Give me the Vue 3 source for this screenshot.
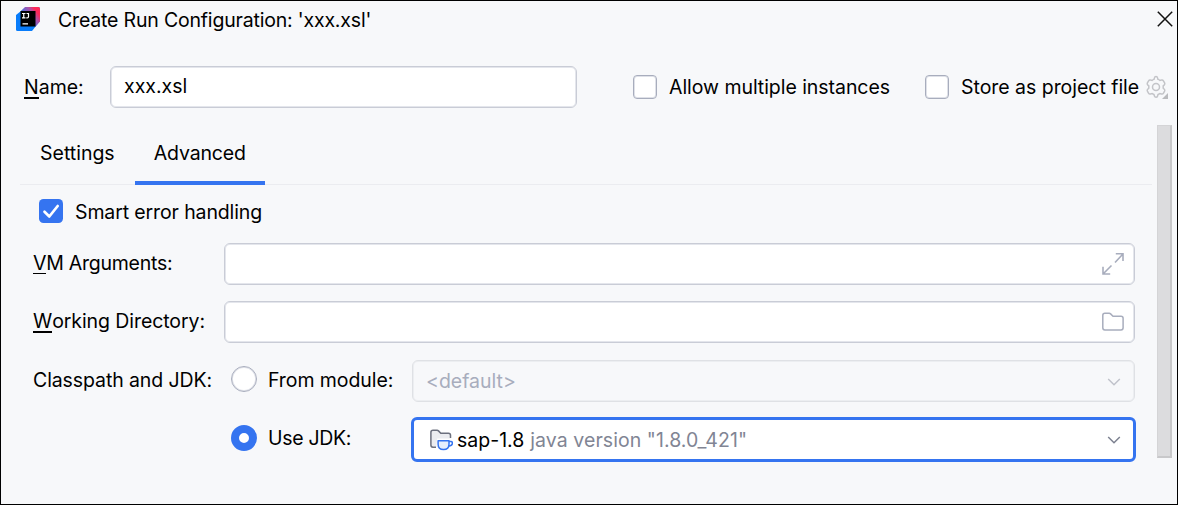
<script setup>
import { ref } from 'vue'

const name = ref('xxx.xsl')
const tabs = ['Settings', 'Advanced']
const active = ref('Advanced')
</script>

<template>
  <div class="dialog">
    <header class="titlebar">
      <svg class="logo" width="24" height="24" viewBox="0 0 24 24">
        <defs>
          <linearGradient id="pink" x1="0.2" y1="0.6" x2="0.9" y2="0.1">
            <stop offset="0" stop-color="#3573e8" />
            <stop offset="0.55" stop-color="#a653ad" />
            <stop offset="0.85" stop-color="#fe2857" />
          </linearGradient>
        </defs>
        <path d="M10 0H22.5Q24 0 24 1.5V14L16 24H1.5Q0 24 0 22.5V8Z" fill="#087cfa" />
        <path d="M9 0H22.5Q24 0 24 1.5V14.5L19 20V4H5Z" fill="url(#pink)" />
        <rect x="4.5" y="4" width="15" height="15.5" fill="#000" />
        <path d="M6 6.5h3.5M7.75 6.5v4.3M6 10.8h3.5M10.5 6.5h2v3.2q0 1.1-1.3 1.1h-.9M6.5 16.8h5.5" fill="none" stroke="#fff" stroke-width="1.2" />
      </svg>
      <h1 class="title">Create Run Configuration: 'xxx.xsl'</h1>
      <svg class="close" width="16" height="16" viewBox="0 0 16 16">
        <path d="M.8.8 15.2 15.2M15.2.8.8 15.2" fill="none" stroke="#111" stroke-width="1.5" />
      </svg>
    </header>

    <div class="name-row">
      <label class="name-label"><span class="key thick">N</span>ame:</label>
      <div class="field name-field"><span class="t-value">{{ name }}</span></div>
      <span class="box multi"></span>
      <span class="t-allow">Allow multiple instances</span>
      <span class="box store"></span>
      <span class="t-store">Store as project file</span>
      <svg class="gear" width="24" height="24" viewBox="0 0 24 24">
        <path d="M9.4 2.9Q9.7 1.6 11 1.6Q12.3 1.6 12.6 2.9L13 4.4Q14 4.7 14.9 5.4L16.4 5Q17.7 4.6 18.4 5.8L19.6 7.8Q20.2 9 19.3 9.9L18.2 10.8V13.2L19.3 14.2Q20.2 15.1 19.6 16.2L18.5 18.1Q17.8 19.3 16.5 18.9L14.9 18.5L13 19.6L12.6 21Q12.2 22.3 11 22.3Q9.8 22.3 9.4 21L9 19.6L7.1 18.5L5.5 18.9Q4.2 19.3 3.5 18.1L2.4 16.2Q1.8 15.1 2.7 14.2L3.8 13.2V10.8L2.7 9.9Q1.8 9 2.4 7.8L3.6 5.8Q4.3 4.6 5.6 5L7.1 5.4Q8 4.7 9 4.4Z" fill="none" stroke="#c3c4c8" stroke-width="1.5" />
        <circle cx="11" cy="12" r="3.5" fill="none" stroke="#c3c4c8" stroke-width="1.5" />
        <path d="M23 18v6h-6z" fill="#b9babd" />
      </svg>
    </div>

    <div class="body">
      <main class="panel">
        <nav class="tabs">
          <span v-for="t in tabs" :key="t" class="tab" :class="{ on: t === active }">{{ t }}</span>
        </nav>

        <div class="smart">
          <svg width="24" height="24" viewBox="0 0 24 24">
            <rect width="24" height="24" rx="4.5" fill="#3574f0" />
            <path d="M5.5 12.8 10.3 17.5 18.7 7" fill="none" stroke="#fff" stroke-width="2.7" stroke-linecap="round" stroke-linejoin="round" />
          </svg>
          <span class="t-smart">Smart error handling</span>
        </div>

        <div class="row">
          <label class="lead t-vm"><span class="key">V</span>M Arguments:</label>
          <div class="field end">
            <svg width="24" height="24" viewBox="0 0 24 24">
              <path d="M14 10.5 21.7 2.3M14.8 1.8h7.2v7.2M10.5 13.5 2.3 21.7M2 14.8v7.2h7.2" fill="none" stroke="#a8adbd" stroke-width="1.6" />
            </svg>
          </div>
        </div>

        <div class="row">
          <label class="lead t-wd"><span class="key thick">W</span>orking Directory:</label>
          <div class="field end">
            <svg width="24" height="24" viewBox="0 0 24 24">
              <path d="M1.8 5.4Q1.8 3.3 3.9 3.3H8.2Q9 3.3 9.6 3.9L12 6.2H20Q22.1 6.2 22.1 8.3V17.8Q22.1 19.9 20 19.9H3.9Q1.8 19.9 1.8 17.8Z" fill="none" stroke="#a8adbd" stroke-width="1.5" />
            </svg>
          </div>
        </div>

        <div class="row">
          <label class="lead t-cp">Classpath and JDK:</label>
          <span class="radio"></span>
          <span class="option t-from">From module:</span>
          <div class="field select disabled">
            <span class="t-default">&lt;default&gt;</span>
            <svg width="14" height="8" viewBox="0 0 14 8">
              <path d="M1.2 1 7 6.7 12.8 1" fill="none" stroke="#c0c3cb" stroke-width="1.5" />
            </svg>
          </div>
        </div>

        <div class="row">
          <span class="lead"></span>
          <span class="radio checked"></span>
          <span class="option t-use">Use JDK:</span>
          <div class="field select focused">
            <svg class="jdk" width="24" height="24" viewBox="0 0 24 24">
              <path d="M7.3 19.2H4Q1.9 19.2 1.9 17.1V4.4Q1.9 2.3 4 2.3H8.1Q8.9 2.3 9.5 2.9L11.8 5.2H19.4Q21.5 5.2 21.5 7.3V10.5H8.2Z" fill="#ebecf0" />
              <path d="M7 19.2H4Q1.9 19.2 1.9 17.1V4.4Q1.9 2.3 4 2.3H8.1Q8.9 2.3 9.5 2.9L11.8 5.2H19.4Q21.5 5.2 21.5 7.3V10" fill="none" stroke="#6c707e" stroke-width="1.5" />
              <path d="M9.1 12.8H20V16.2Q20 21.5 14.55 21.5Q9.1 21.5 9.1 16.2Z" fill="#e7effd" stroke="#3574f0" stroke-width="1.5" stroke-linejoin="round" />
              <path d="M20 13.5h1.8q1.6 0 1.6 1.6q0 2.5-3.7 2.9" fill="none" stroke="#3574f0" stroke-width="1.5" />
            </svg>
            <span class="t-sap">sap-1.8</span>
            <span class="t-java">java version "1.8.0_421"</span>
            <svg width="14" height="8" viewBox="0 0 14 8">
              <path d="M1.2 1 7 6.7 12.8 1" fill="none" stroke="#7c8190" stroke-width="1.5" />
            </svg>
          </div>
        </div>
      </main>
      <div class="scrollbar"></div>
    </div>
  </div>
</template>

<style>
body {
  margin: 0;
  overflow: hidden;
}
</style>

<style scoped>
* {
  box-sizing: border-box;
}
.dialog {
  width: 1178px;
  height: 505px;
  border: 1px solid #000;
  background: #f7f8fa;
  color: #000;
  font-family: Inter, "Liberation Sans", sans-serif;
  font-size: 19.5px;
  line-height: 24px;
  white-space: pre;
}
svg {
  display: block;
  flex: none;
}
.titlebar {
  display: flex;
  align-items: center;
  height: 37px;
  padding: 0 5px 0 15px;
}
.title {
  margin: 0 auto 0 18px;
  font-size: inherit;
  font-weight: 400;
  letter-spacing: -0.18px;
}
.logo {
  margin-top: -1px;
}
.close {
  margin: -1px -0.5px 0 0;
}
.name-row {
  display: flex;
  align-items: center;
  height: 42px;
  margin-top: 28px;
  padding-left: 23px;
}
.name-label {
  width: 86px;
}
.key {
  display: inline-block;
  height: 23px;
  border-bottom: 1px solid #000;
}
.key.thick {
  height: 24px;
  border-bottom-width: 2px;
}
.field {
  display: flex;
  flex: 1;
  align-items: center;
  height: 42px;
  border: 1px solid #c9ccd6;
  box-shadow: inset 0 0 0 1px #e4e6ec;
  border-radius: 6px;
  background: #fff;
}
.name-field {
  flex: none;
  width: 467px;
  padding: 0 0 2px 13px;
}
.box {
  flex: none;
  width: 24px;
  height: 24px;
  margin-right: 12px;
  border: 1px solid #a8adbd;
  box-shadow: inset 0 0 0 1px #dfe1e8;
  border-radius: 4px;
  background: #fff;
}
.multi {
  margin-left: 56px;
}
.t-allow {
  width: 256px;
  letter-spacing: -0.05px;
}
.t-store {
  width: 184px;
  letter-spacing: -0.03px;
}
.body {
  display: flex;
  margin-top: 17px;
}
.panel {
  width: 1132px;
  margin: 0 5px 0 19px;
}
.tabs {
  display: flex;
  height: 60px;
  border-bottom: 1px solid #ebecf0;
}
.tab {
  height: 60px;
  padding: 16px 20px 0;
}
.tab.on {
  width: 130px;
  padding-left: 19px;
  letter-spacing: -0.13px;
  background: linear-gradient(#3574f0, #3574f0) bottom / 100% 4px no-repeat;
}
.smart {
  display: flex;
  align-items: center;
  gap: 12px;
  height: 24px;
  margin: 14px 0 19.5px 19px;
}
.t-smart {
  padding-top: 2px;
  letter-spacing: -0.12px;
}
.row {
  display: flex;
  align-items: center;
  height: 42px;
  margin: 0 17px 16.5px 13px;
}
.lead {
  flex: none;
  width: 191px;
  padding-bottom: 2px;
}
.t-vm {
  letter-spacing: -0.25px;
}
.t-wd,
.t-from {
  letter-spacing: -0.08px;
}
.t-cp {
  letter-spacing: -0.1px;
}
.t-use {
  letter-spacing: -0.3px;
}
.end {
  justify-content: flex-end;
  padding-right: 9px;
}
.radio {
  flex: none;
  width: 26px;
  height: 26px;
  margin: -2.5px 11px 0 7px;
  border: 1px solid #a8adbd;
  box-shadow: inset 0 0 0 1px #dfe1e8;
  border-radius: 50%;
  background: #fff;
}
.radio.checked {
  border: 8.5px solid #3574f0;
  box-shadow: none;
}
.option {
  flex: none;
  width: 144px;
  padding-bottom: 2px;
}
.select {
  padding: 0 13px;
}
.select > svg:last-child {
  margin: 2px 0 0 auto;
}
.disabled {
  border-color: #dfe1e5;
  box-shadow: inset 0 0 0 1px #eceef1;
  background: #f7f8fa;
  color: #a8adbd;
}
.focused {
  height: 45px;
  margin: 0 -1px 0 -1px;
  padding: 0 12px;
  border: 3px solid #3574f0;
  box-shadow: none;
}
.jdk {
  margin: 1px 4px 0 3px;
}
.t-sap,
.t-java {
  padding-top: 1px;
}
.t-java {
  margin-left: 6px;
  color: #818594;
  letter-spacing: 0.06px;
}
.scrollbar {
  width: 15px;
  height: 333px;
  border: 1px solid #d4d4d6;
  border-right: 2px solid #c8c8ca;
  border-bottom: 2px solid #c8c8ca;
  background: #dcdcde;
}
</style>
